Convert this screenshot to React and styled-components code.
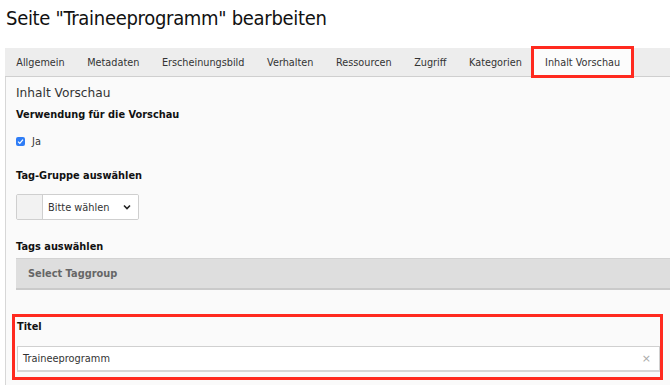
import React from "react";
import styled, { createGlobalStyle } from "styled-components";

const Global = createGlobalStyle`
  body {
    margin: 0;
    background: #fff;
    font-family: "DejaVu Sans", Verdana, sans-serif;
    color: #333;
  }
`;

const Page = styled.div`
  width: 670px;
  height: 385px;
  overflow: hidden;
  padding-left: 5px;
  box-sizing: border-box;
`;

const Title = styled.h1`
  margin: 0;
  padding: 6px 0 0 1px;
  height: 46px;
  box-sizing: border-box;
  font-family: "DejaVu Sans Condensed", "DejaVu Sans", sans-serif;
  font-stretch: condensed;
  font-weight: normal;
  font-size: 20px;
  letter-spacing: -0.3px;
  color: #111;
`;

const TabBar = styled.div`
  display: flex;
  align-items: stretch;
  height: 28px;
  margin-top: 2px;
  background: #ededed;
  border-bottom: 1px solid #cfcfcf;
`;

const Tab = styled.div`
  display: flex;
  align-items: center;
  white-space: nowrap;
  padding: 0 ${(p) => (p.$active ? "12px" : "11.3px")};
  font-size: 9.7px;
  color: #333;
  background: ${(p) => (p.$active ? "#fcfcfc" : "transparent")};
  outline: ${(p) => (p.$active ? "3px solid #ff2a1f" : "none")};
  outline-offset: -1px;
  position: relative;
  z-index: ${(p) => (p.$active ? 1 : 0)};
`;

const Panel = styled.div`
  background: #fafafa;
  border-left: 1px solid #d7d7d7;
  padding: 9px 0 0 10px;
  height: 320px;
  box-sizing: border-box;
`;

const SectionTitle = styled.div`
  font-size: 12.2px;
  color: #333;
  margin-bottom: 9px;
`;

const Label = styled.div`
  font-size: 9.8px;
  font-weight: bold;
  color: #111;
`;

const Field = styled.div`
  margin-bottom: ${(p) => p.$gap || "22px"};
`;

const CheckRow = styled.label`
  display: flex;
  align-items: center;
  gap: 7px;
  margin-top: 16px;
  font-size: 9.8px;
  color: #333;
`;

const CheckBox = styled.span`
  width: 9px;
  height: 9px;
  border-radius: 2px;
  background: #2f7df6;
  display: flex;
  align-items: center;
  justify-content: center;
`;

const SelectGroup = styled.div`
  display: flex;
  width: 123px;
  height: 26px;
  margin-top: 13px;
  border: 1px solid #cfcfcf;
  box-sizing: border-box;
  border-radius: 2px;
  overflow: hidden;
`;

const Addon = styled.div`
  width: 25px;
  background: #f2f2f2;
  border-right: 1px solid #cfcfcf;
`;

const SelectBox = styled.div`
  flex: 1;
  background: #fff;
  display: flex;
  align-items: center;
  justify-content: space-between;
  padding: 0 7px 0 5px;
  font-size: 9.8px;
  color: #333;
`;

const TagBox = styled.div`
  margin-top: 6px;
  height: 32px;
  background: #dedede;
  border-top: 1px solid #d2d2d2;
  border-bottom: 2px solid #cacaca;
  box-sizing: border-box;
  display: flex;
  align-items: center;
  padding-left: 12px;
  font-size: 9.8px;
  font-weight: bold;
  color: #666;
`;

const Highlight = styled.div`
  margin: 24px 7px 0 -4px;
  border: 3px solid #ff2a1f;
  padding: 4px 0 5px 2px;
`;

const Input = styled.div`
  margin-top: 14px;
  height: 26px;
  background: #fff;
  border: 1px solid #d0d0d0;
  border-bottom: 2px solid #d6d6d6;
  box-sizing: border-box;
  display: flex;
  align-items: center;
  justify-content: space-between;
  padding: 0 8px 0 5px;
  font-size: 9.8px;
  color: #333;
`;

const Clear = styled.span`
  color: #aaa;
  font-size: 11px;
`;

const tabs = [
  "Allgemein",
  "Metadaten",
  "Erscheinungsbild",
  "Verhalten",
  "Ressourcen",
  "Zugriff",
  "Kategorien",
];

export default function App() {
  return (
    <Page>
      <Global />
      <Title>Seite "Traineeprogramm" bearbeiten</Title>
      <TabBar>
        {tabs.map((t) => (
          <Tab key={t}>{t}</Tab>
        ))}
        <Tab $active>Inhalt Vorschau</Tab>
      </TabBar>
      <Panel>
        <SectionTitle>Inhalt Vorschau</SectionTitle>
        <Field $gap="23px">
          <Label>Verwendung für die Vorschau</Label>
          <CheckRow>
            <CheckBox>
              <svg width="7" height="7" viewBox="0 0 8 8">
                <path d="M1.2 4.2 3.2 6.1 6.8 1.8" fill="none" stroke="#fff" strokeWidth="1.4" />
              </svg>
            </CheckBox>
            Ja
          </CheckRow>
        </Field>
        <Field $gap="21px">
          <Label>Tag-Gruppe auswählen</Label>
          <SelectGroup>
            <Addon />
            <SelectBox>
              Bitte wählen
              <svg width="8" height="6" viewBox="0 0 8 6">
                <path d="M1 1.5 4 4.5 7 1.5" fill="none" stroke="#222" strokeWidth="1.6" />
              </svg>
            </SelectBox>
          </SelectGroup>
        </Field>
        <Field $gap="0">
          <Label>Tags auswählen</Label>
          <TagBox>Select Taggroup</TagBox>
        </Field>
        <Highlight>
          <Label>Titel</Label>
          <Input>
            Traineeprogramm
            <Clear>×</Clear>
          </Input>
        </Highlight>
      </Panel>
    </Page>
  );
}
